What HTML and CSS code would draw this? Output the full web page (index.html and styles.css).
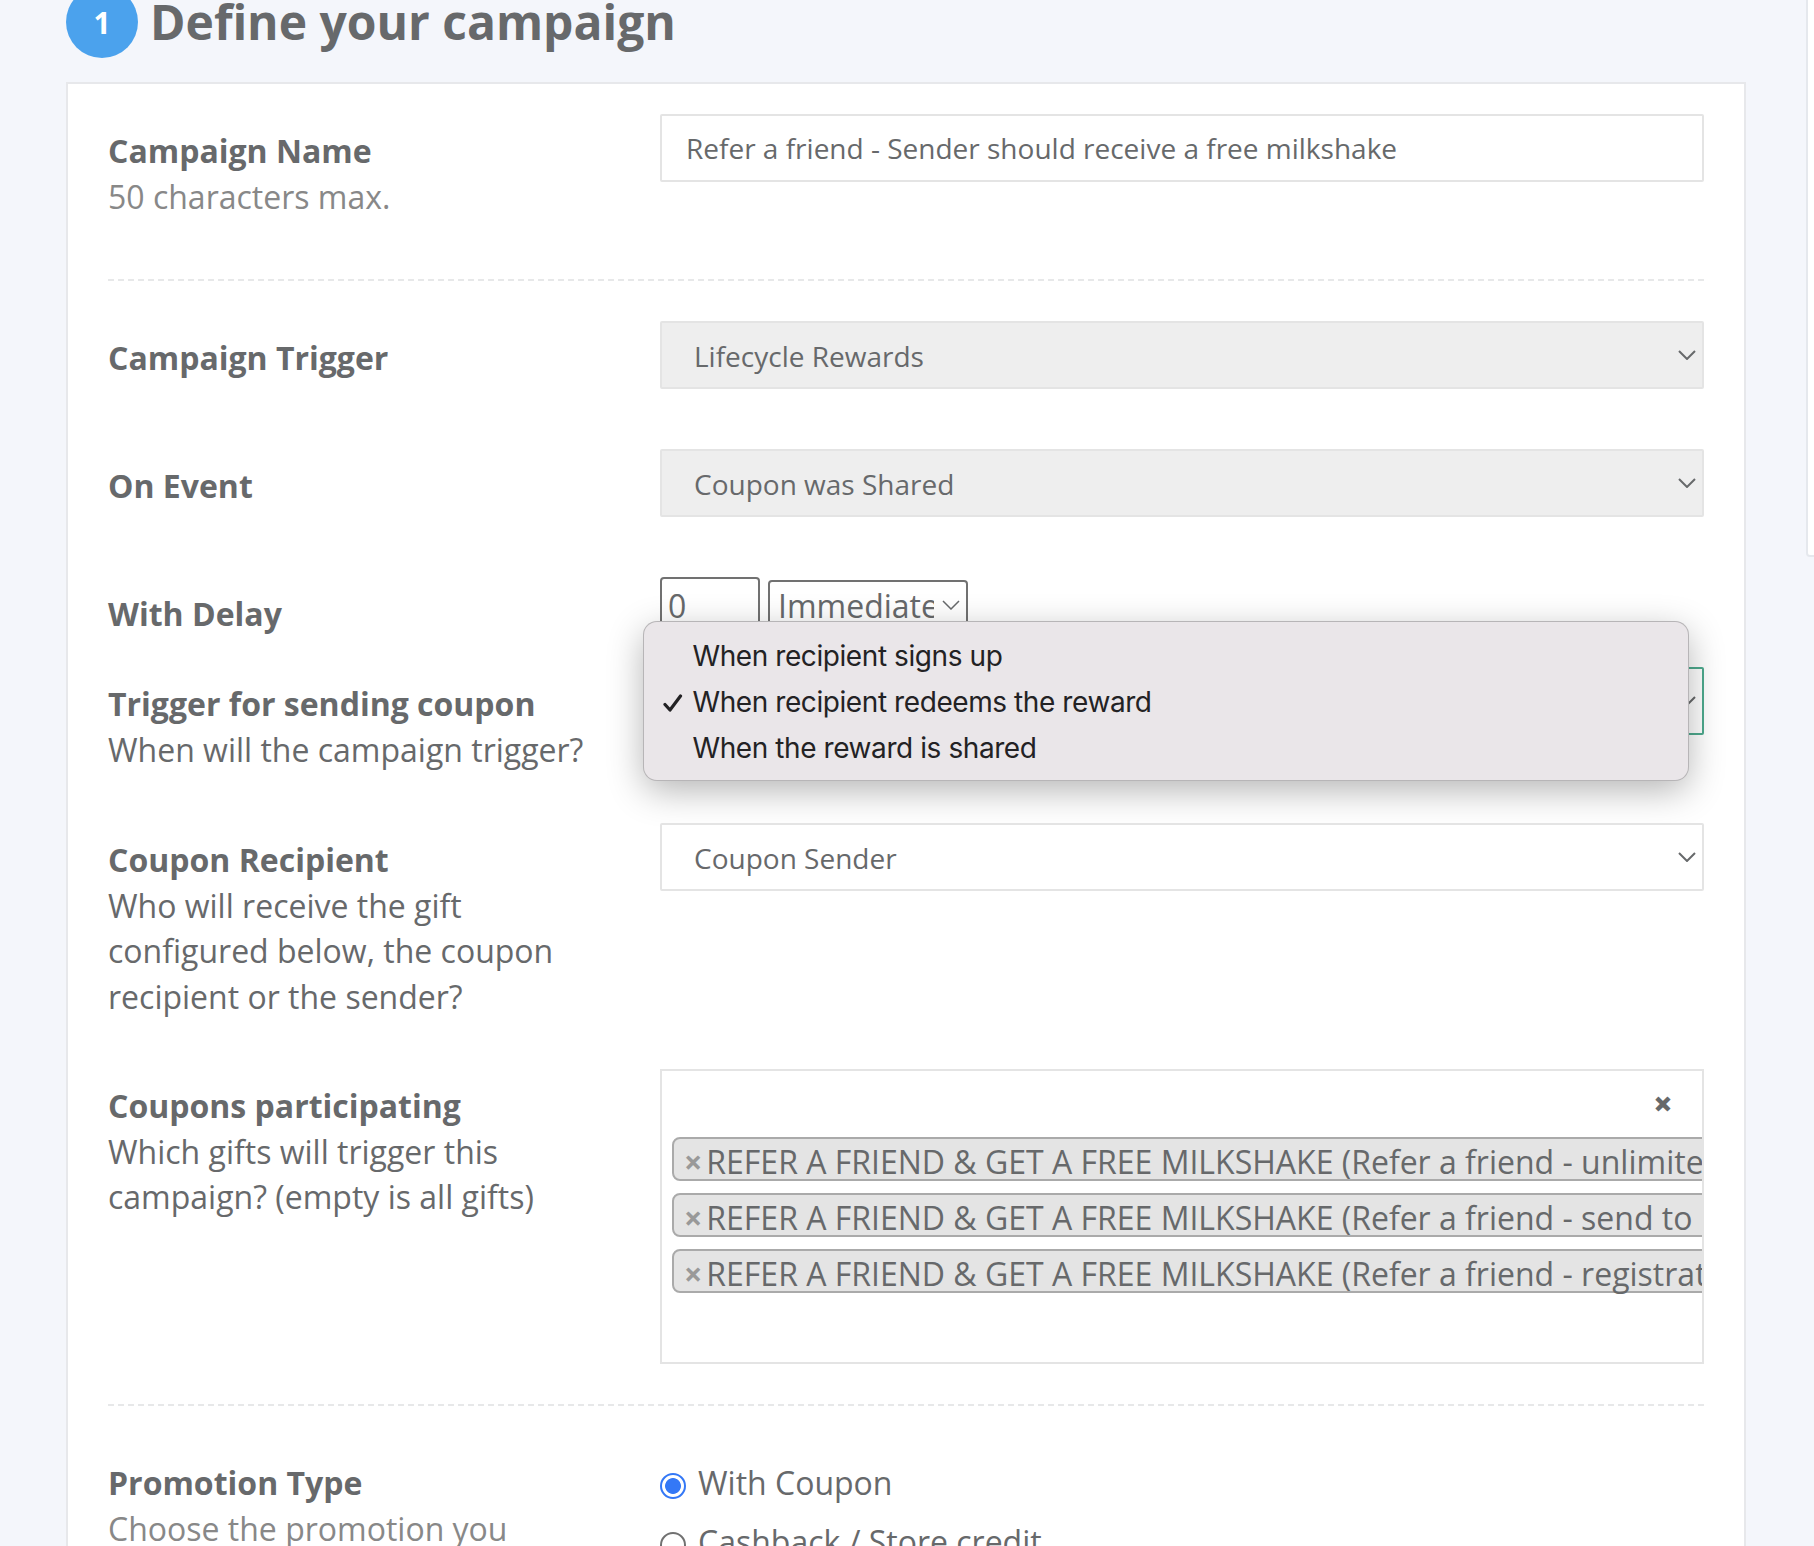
FILE: index.html
```html
<!DOCTYPE html>
<html lang="en">
<head>
<meta charset="utf-8">
<title>Define your campaign</title>
<link rel="stylesheet" href="styles.css">
</head>
<body>
<svg class="defs" aria-hidden="true">
  <symbol id="chevron" viewBox="0 0 18 10"><path d="M1 1l8 8 8-8" fill="none" stroke="currentColor" stroke-width="2"/></symbol>
</svg>
<div class="page">
  <main class="main">
    <header class="step">
      <span class="step-number">1</span>
      <h1 class="step-title">Define your campaign</h1>
    </header>
    <section class="card">
      <div class="row row-name">
        <div class="label"><strong>Campaign Name</strong><span class="muted">50 characters max.</span></div>
        <div class="control"><div class="field field-text">Refer a friend - Sender should receive a free milkshake</div></div>
      </div>
      <hr class="divider">
      <div class="row row-plain">
        <div class="label"><strong>Campaign Trigger</strong></div>
        <div class="control"><div class="field disabled">Lifecycle Rewards<svg class="chevron"><use href="#chevron"/></svg></div></div>
      </div>
      <div class="row row-plain">
        <div class="label"><strong>On Event</strong></div>
        <div class="control"><div class="field disabled">Coupon was Shared<svg class="chevron"><use href="#chevron"/></svg></div></div>
      </div>
      <div class="row row-delay">
        <div class="label"><strong>With Delay</strong></div>
        <div class="control delay">
          <div class="delay-count">0</div>
          <div class="delay-unit"><span class="delay-unit-text">Immediately</span><svg class="chevron" viewBox="0 0 18 10"><path d="M1 1l8 8 8-8" fill="none" stroke="currentColor" stroke-width="1.5"/></svg></div>
        </div>
      </div>
      <div class="row row-trigger">
        <div class="label"><strong>Trigger for sending coupon</strong><span>When will the campaign trigger?</span></div>
        <div class="control">
          <div class="field focused"><svg class="chevron"><use href="#chevron"/></svg></div>
          <ul class="menu">
            <li>When recipient signs up</li>
            <li><svg class="check" viewBox="0 0 20 18"><path d="M2 10.5l5 5.5L17.5 2" fill="none" stroke="currentColor" stroke-width="3.2" stroke-linecap="round" stroke-linejoin="round"/></svg>When recipient redeems the reward</li>
            <li>When the reward is shared</li>
          </ul>
        </div>
      </div>
      <div class="row row-recipient">
        <div class="label"><strong>Coupon Recipient</strong><span>Who will receive the gift<br>configured below, the coupon<br>recipient or the sender?</span></div>
        <div class="control"><div class="field">Coupon Sender<svg class="chevron"><use href="#chevron"/></svg></div></div>
      </div>
      <div class="row row-coupons">
        <div class="label"><strong>Coupons participating</strong><span>Which gifts will trigger this<br>campaign? (empty is all gifts)</span></div>
        <div class="control">
          <div class="multi">
            <div class="clear">×</div>
            <div class="chip"><b>×</b>REFER A FRIEND &amp; GET A FREE MILKSHAKE (Refer a friend - unlimited</div>
            <div class="chip"><b>×</b>REFER A FRIEND &amp; GET A FREE MILKSHAKE (Refer a friend - send to</div>
            <div class="chip"><b>×</b>REFER A FRIEND &amp; GET A FREE MILKSHAKE (Refer a friend - registrat</div>
          </div>
        </div>
      </div>
      <hr class="divider">
      <div class="row">
        <div class="label"><strong>Promotion Type</strong><span class="muted">Choose the promotion you</span></div>
        <div class="control radios">
          <div class="option"><i class="radio checked"></i>With Coupon</div>
          <div class="option"><i class="radio"></i>Cashback / Store credit</div>
        </div>
      </div>
    </section>
  </main>
  <aside class="side"></aside>
</div>
</body>
</html>
```
FILE: styles.css
```css
* { box-sizing: border-box; }
html, body { height: 100%; margin: 0; overflow: hidden; }
body {
  background: #f4f6fb;
  color: #67696b;
  font: 32px/45.7px "Open Sans", sans-serif;
}
.defs { display: none; }
.page { display: flex; align-items: flex-start; height: 1546px; overflow: hidden; padding-left: 66px; }
.main { flex: 0 0 1680px; margin-right: 60px; }
.side {
  flex: 0 0 300px;
  height: 557px;
  background: #fff;
  border: 2px solid #e5e8ed;
  border-top: 0;
  border-radius: 0 0 4px 4px;
}

.step { display: flex; align-items: center; height: 72px; margin: -14px 0 24px; }
.step-number {
  width: 72px;
  height: 72px;
  margin-right: 12px;
  border-radius: 50%;
  background: #4ba2ed;
  color: #fff;
  font-size: 30px;
  font-weight: 700;
  line-height: 73px;
  text-align: center;
}
.step-title { margin: 0; font-size: 48px; font-weight: 700; line-height: 68px; white-space: nowrap; }

.card { height: 1600px; padding: 30px 40px 0; background: #fff; border: 2px solid #e7e8eb; }
.row { display: grid; grid-template-columns: 552px 1044px; align-items: start; }
.row-name { height: 165px; }
.row-plain { height: 128px; }
.row-delay { height: 90px; }
.row-trigger { height: 156px; }
.row-recipient { height: 246px; }
.row-coupons { height: 335px; }
.divider { margin: 0 0 40px; border: 0; border-top: 2px dashed #e7e8e9; }
.label { padding-top: 14px; white-space: nowrap; }
.label strong, .label span { display: block; }
.label .muted { color: #888; }
.control { position: relative; min-width: 0; }

.field {
  display: flex;
  align-items: center;
  justify-content: space-between;
  height: 68px;
  padding: 1px 6px 0 32px;
  border: 2px solid #e4e4e4;
  border-radius: 2px;
  background: #fff;
  font-size: 28px;
  line-height: 40px;
}
.field-text { padding: 0 24px; }
.disabled { background: #eee; }
.focused { justify-content: flex-end; border-color: #4eaa8e; }
.chevron { flex: none; width: 18px; height: 10px; margin-top: -2px; }

.delay { display: flex; gap: 8px; }
.delay-count, .delay-unit { border: 2px solid #717171; border-radius: 4px; }
.delay-count { width: 100px; height: 58px; padding: 4px 6px; }
.delay-unit { display: flex; align-items: center; width: 200px; height: 52px; margin-top: 3px; padding: 0 4px 0 8px; }
.delay-unit-text { flex: none; width: 156px; margin-right: 8px; overflow: hidden; }

.menu {
  position: absolute;
  top: -45px;
  left: -16px;
  width: 1044px;
  height: 158px;
  margin: 0;
  padding: 11px 0;
  border-radius: 13px;
  background: #eae6e9;
  box-shadow: 0 0 0 1px #b7b5b7, 0 10px 36px rgba(0, 0, 0, .3);
  color: #232224;
  font: 28px/46px Inter, sans-serif;
  letter-spacing: -0.42px;
  list-style: none;
}
.menu li { position: relative; padding-left: 48.5px; }
.check { position: absolute; left: 18.5px; top: 14.5px; width: 20px; height: 18px; }

.multi { height: 295px; padding: 10px 0 0 10px; border: 2px solid #e4e4e4; overflow: hidden; }
.clear { height: 56px; padding-right: 29px; font-size: 34px; font-weight: 800; line-height: 44px; text-align: right; }
.chip {
  width: 1300px;
  height: 44px;
  margin-bottom: 12px;
  padding-left: 10px;
  border: 2px solid #aaa;
  border-radius: 8px;
  background: #e4e4e4;
  line-height: 45px;
  white-space: nowrap;
}
.chip b { margin-right: 4px; color: #999; }

.radios { padding-top: 14px; }
.option { display: flex; align-items: center; height: 59px; line-height: 46px; padding-bottom: 13px; white-space: nowrap; }
.radio { width: 26px; height: 26px; margin: 5px 12px 0 0; border: 2px solid #717171; border-radius: 50%; }
.checked { border-color: #3478f6; background: radial-gradient(circle, #3478f6 0 7.5px, #fff 8.3px); }
```
